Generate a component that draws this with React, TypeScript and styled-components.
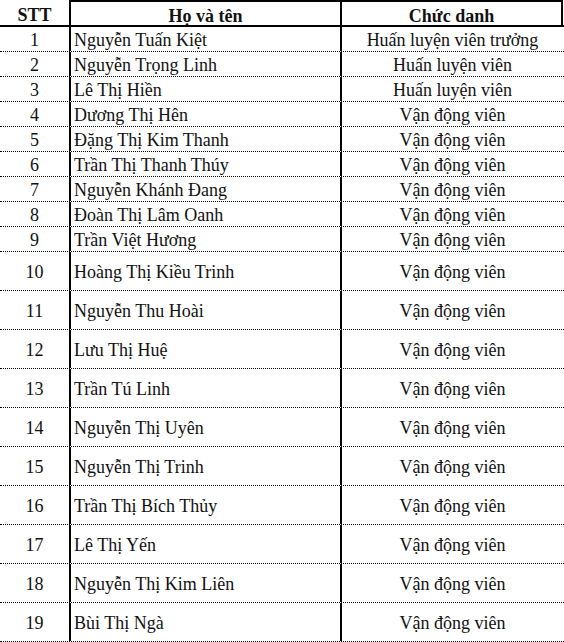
import styled, { createGlobalStyle } from "styled-components";

const GlobalStyle = createGlobalStyle`
  html, body {
    margin: 0;
    padding: 0;
    background: #fff;
  }
  body {
    font-family: "Liberation Serif", "Times New Roman", serif;
    color: #111;
  }
`;

type Member = { name: string; role: string };

const members: Member[] = [
  { name: "Nguyễn Tuấn Kiệt", role: "Huấn luyện viên trưởng" },
  { name: "Nguyễn Trọng Linh", role: "Huấn luyện viên" },
  { name: "Lê Thị Hiền", role: "Huấn luyện viên" },
  { name: "Dương Thị Hên", role: "Vận động viên" },
  { name: "Đặng Thị Kim Thanh", role: "Vận động viên" },
  { name: "Trần Thị Thanh Thúy", role: "Vận động viên" },
  { name: "Nguyễn Khánh Đang", role: "Vận động viên" },
  { name: "Đoàn Thị Lâm Oanh", role: "Vận động viên" },
  { name: "Trần Việt Hương", role: "Vận động viên" },
  { name: "Hoàng Thị Kiều Trinh", role: "Vận động viên" },
  { name: "Nguyễn Thu Hoài", role: "Vận động viên" },
  { name: "Lưu Thị Huệ", role: "Vận động viên" },
  { name: "Trần Tú Linh", role: "Vận động viên" },
  { name: "Nguyễn Thị Uyên", role: "Vận động viên" },
  { name: "Nguyễn Thị Trinh", role: "Vận động viên" },
  { name: "Trần Thị Bích Thủy", role: "Vận động viên" },
  { name: "Lê Thị Yến", role: "Vận động viên" },
  { name: "Nguyễn Thị Kim Liên", role: "Vận động viên" },
  { name: "Bùi Thị Ngà", role: "Vận động viên" },
];

/* ---------- styles ---------- */

const Table = styled.div`
  width: 564px;
  display: flex;
  flex-direction: column;
  font-size: 18px;
`;

const Row = styled.div<{ $tall?: boolean }>`
  display: grid;
  grid-template-columns: 71px 271px 221px;
  height: ${(p) => (p.$tall ? 39 : 25)}px;
  box-sizing: border-box;
  border-bottom: 1px dotted #000;
`;

const HeaderRow = styled.div`
  display: grid;
  grid-template-columns: 71px 271px 221px;
  height: 27px;
  box-sizing: border-box;
  border-bottom: 2px solid #000;
`;

const Cell = styled.div<{ $align?: "left" | "center"; $last?: boolean }>`
  display: flex;
  align-items: center;
  justify-content: ${(p) => (p.$align === "left" ? "flex-start" : "center")};
  padding: 3px 0 0 ${(p) => (p.$align === "left" ? "3px" : "0")};
  box-sizing: border-box;
  border-right: ${(p) => (p.$last ? "none" : "2px solid #000")};
  white-space: nowrap;
`;

const HeadCell = styled.div<{ $boxed?: boolean; $right?: boolean }>`
  display: flex;
  align-items: center;
  justify-content: center;
  padding-top: 4px;
  box-sizing: border-box;
  font-weight: bold;
  border-top: ${(p) => (p.$boxed ? "2px solid #000" : "none")};
  border-right: 2px solid #000;
`;

export default function App() {
  return (
    <>
      <GlobalStyle />
      <Table>
        <HeaderRow>
          <HeadCell>STT</HeadCell>
          <HeadCell $boxed>Họ và tên</HeadCell>
          <HeadCell $boxed>Chức danh</HeadCell>
        </HeaderRow>
        {members.map((m, i) => (
          <Row key={i} $tall={i >= 9}>
            <Cell>{i + 1}</Cell>
            <Cell $align="left">{m.name}</Cell>
            <Cell $last>{m.role}</Cell>
          </Row>
        ))}
      </Table>
    </>
  );
}
